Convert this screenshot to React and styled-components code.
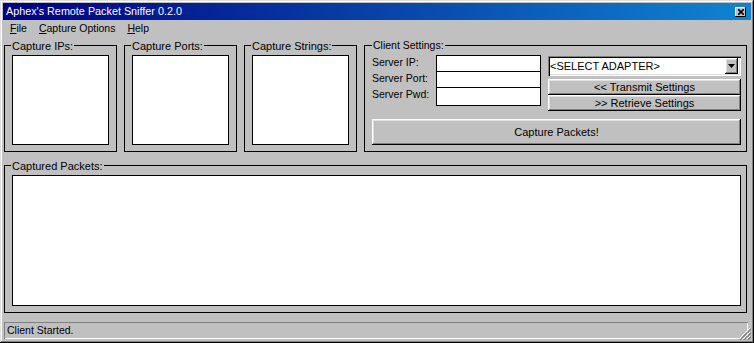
import React from 'react';
import styled, { createGlobalStyle } from 'styled-components';

const Global = createGlobalStyle`
  html, body { margin: 0; padding: 0; background: #c0c0c0; }
  body { font-family: "Liberation Sans", Arial, sans-serif; }
  * { box-sizing: border-box; }
`;

const raised = `box-shadow: inset -1px -1px #000, inset 1px 1px #fff, inset -2px -2px #808080, inset 2px 2px #dfdfdf;`;

const Window = styled.div`
  position: relative;
  width: 754px;
  height: 343px;
  background: #c0c0c0;
  padding: 3px;
  box-shadow: inset -1px -1px #000, inset 1px 1px #dfdfdf, inset -2px -2px #808080, inset 2px 2px #fff;
  display: flex;
  flex-direction: column;
  font-family: "Liberation Sans", Arial, sans-serif;
  font-size: 11px;
  color: #000;
`;

const TitleBar = styled.div`
  height: 17px;
  flex: none;
  background: linear-gradient(to right, #000080, #1084d0);
  color: #fff;
  display: flex;
  align-items: center;
  justify-content: space-between;
  padding: 0 5px 0 3px;
  line-height: 17px;
  font-size: 10.8px;
  white-space: nowrap;
`;

const CloseBtn = styled.div`
  width: 11px;
  height: 10px;
  background: #c0c0c0;
  box-shadow: inset -1px -1px #000, inset 1px 1px #fff;
  display: flex;
  align-items: center;
  justify-content: center;
`;

const MenuBar = styled.div`
  height: 18px;
  flex: none;
  display: flex;
  align-items: center;
  padding: 0 0 2px 1px;
  font-size: 10.5px;
`;

const MenuItem = styled.span`
  padding: 0 6px;
  white-space: nowrap;
`;

const Body = styled.div`
  flex: 1;
  display: flex;
  flex-direction: column;
  padding: 0 4px 0 1px;
`;

const TopRow = styled.div`
  margin-top: 7px;
  height: 107px;
  flex: none;
  display: flex;
  gap: 7px;
`;

const Group = styled.div`
  position: relative;
  border: 1px solid #000;
  padding: 9px ${p => p.$padR || 7}px 6px 7px;
  width: ${p => (p.$w ? `${p.$w}px` : 'auto')};
  flex: ${p => (p.$w ? 'none' : '1')};
  display: flex;
  flex-direction: column;
`;

const CapturedGroup = styled(Group)`
  margin-top: 13px;
  height: 148px;
  flex: none;
`;

const Caption = styled.span`
  position: absolute;
  top: ${p => (p.$sans ? -7 : -6)}px;
  left: ${p => (p.$sans ? 7 : 6)}px;
  padding: 0 1px;
  background: #c0c0c0;
  line-height: 13px;
  font-size: ${p => (p.$sans ? 10.5 : 11)}px;
  white-space: nowrap;
`;

const ListBox = styled.div`
  flex: 1;
  background: #fff;
  border: 1px solid #000;
`;

const ClientTop = styled.div`
  display: flex;
  height: 56px;
`;

const LabelCol = styled.div`
  width: 64px;
  flex: none;
  margin-top: -1px;
  line-height: 16px;
  font-size: 10.5px;
  white-space: nowrap;
`;

const InputStack = styled.div`
  width: 105px;
  flex: none;
  display: flex;
  flex-direction: column;
`;

const TextInput = styled.input`
  display: block;
  width: 105px;
  height: ${p => p.$h}px;
  border: 1px solid #000;
  background: #fff;
  padding: 0 2px;
  margin: 0;
  font: inherit;
  outline: none;
  & + & { margin-top: -1px; }
`;

const RightCol = styled.div`
  flex: 1;
  margin-left: 7px;
  padding-top: 1px;
  display: flex;
  flex-direction: column;
`;

const Select = styled.div`
  height: 20px;
  background: #fff;
  box-shadow: inset 1px 1px #808080, inset 2px 2px #000, inset -1px -1px #fff, inset -2px -2px #dfdfdf;
  display: flex;
  align-items: center;
  justify-content: space-between;
  padding: 2px 3px 2px 1px;
  margin-bottom: 3px;
  font-size: 11px;
  white-space: nowrap;
`;

const SelectText = styled.span`
  padding-left: 1px;
`;

const DropBtn = styled.div`
  width: 13px;
  height: 16px;
  background: #c0c0c0;
  ${raised}
  display: flex;
  align-items: center;
  justify-content: center;
`;

const Button = styled.div`
  height: ${p => p.$h}px;
  flex: none;
  background: #c0c0c0;
  ${raised}
  display: flex;
  align-items: center;
  justify-content: center;
  font-size: 11px;
  white-space: nowrap;
  margin-top: ${p => p.$mt || 0}px;
`;

const StatusBar = styled.div`
  margin-top: 9px;
  margin-right: -1px;
  height: 17px;
  flex: none;
  box-shadow: inset 1px 1px #808080, inset -1px -1px #fff;
  padding: 1px 3px;
  line-height: 15px;
  font-size: 10.5px;
  white-space: nowrap;
`;

const Grip = styled.svg`
  position: absolute;
  right: 3px;
  bottom: 3px;
`;

const Mnemonic = styled.span`
  text-decoration: underline;
`;

export default function App() {
  return (
    <>
      <Global />
      <Window>
        <TitleBar>
          <span>Aphex's Remote Packet Sniffer 0.2.0</span>
          <CloseBtn>
            <svg width="6" height="6" viewBox="0 0 6 6">
              <path d="M0 0 L6 6 M6 0 L0 6" stroke="#000" strokeWidth="1.6" />
            </svg>
          </CloseBtn>
        </TitleBar>
        <MenuBar>
          <MenuItem><Mnemonic>F</Mnemonic>ile</MenuItem>
          <MenuItem><Mnemonic>C</Mnemonic>apture Options</MenuItem>
          <MenuItem><Mnemonic>H</Mnemonic>elp</MenuItem>
        </MenuBar>
        <Body>
          <TopRow>
            <Group $w={113}>
              <Caption>Capture IPs:</Caption>
              <ListBox />
            </Group>
            <Group $w={113}>
              <Caption>Capture Ports:</Caption>
              <ListBox />
            </Group>
            <Group $w={113}>
              <Caption>Capture Strings:</Caption>
              <ListBox />
            </Group>
            <Group $padR={5}>
              <Caption $sans>Client Settings:</Caption>
              <ClientTop>
                <LabelCol>
                  <div>Server IP:</div>
                  <div>Server Port:</div>
                  <div>Server Pwd:</div>
                </LabelCol>
                <InputStack>
                  <TextInput $h={17} readOnly />
                  <TextInput $h={17} readOnly />
                  <TextInput $h={19} readOnly />
                </InputStack>
                <RightCol>
                  <Select>
                    <SelectText>&lt;SELECT ADAPTER&gt;</SelectText>
                    <DropBtn>
                      <svg width="7" height="4" viewBox="0 0 7 4">
                        <path d="M0 0 H7 L3.5 4 Z" fill="#000" />
                      </svg>
                    </DropBtn>
                  </Select>
                  <Button $h={16}>&lt;&lt; Transmit Settings</Button>
                  <Button $h={16}>&gt;&gt; Retrieve Settings</Button>
                </RightCol>
              </ClientTop>
              <Button $h={26} $mt={8}>Capture Packets!</Button>
            </Group>
          </TopRow>
          <CapturedGroup $padR={5}>
            <Caption>Captured Packets:</Caption>
            <ListBox />
          </CapturedGroup>
          <StatusBar>Client Started.</StatusBar>
        </Body>
        <Grip width="13" height="13" viewBox="0 0 13 13">
          <path d="M12 1 L1 12 M12 5 L5 12 M12 9 L9 12" stroke="#fff" strokeWidth="1" />
          <path d="M13 1 L1 13 M13 5 L5 13 M13 9 L9 13" stroke="#808080" strokeWidth="1.4" transform="translate(0.5 0.5)" />
        </Grip>
      </Window>
    </>
  );
}
